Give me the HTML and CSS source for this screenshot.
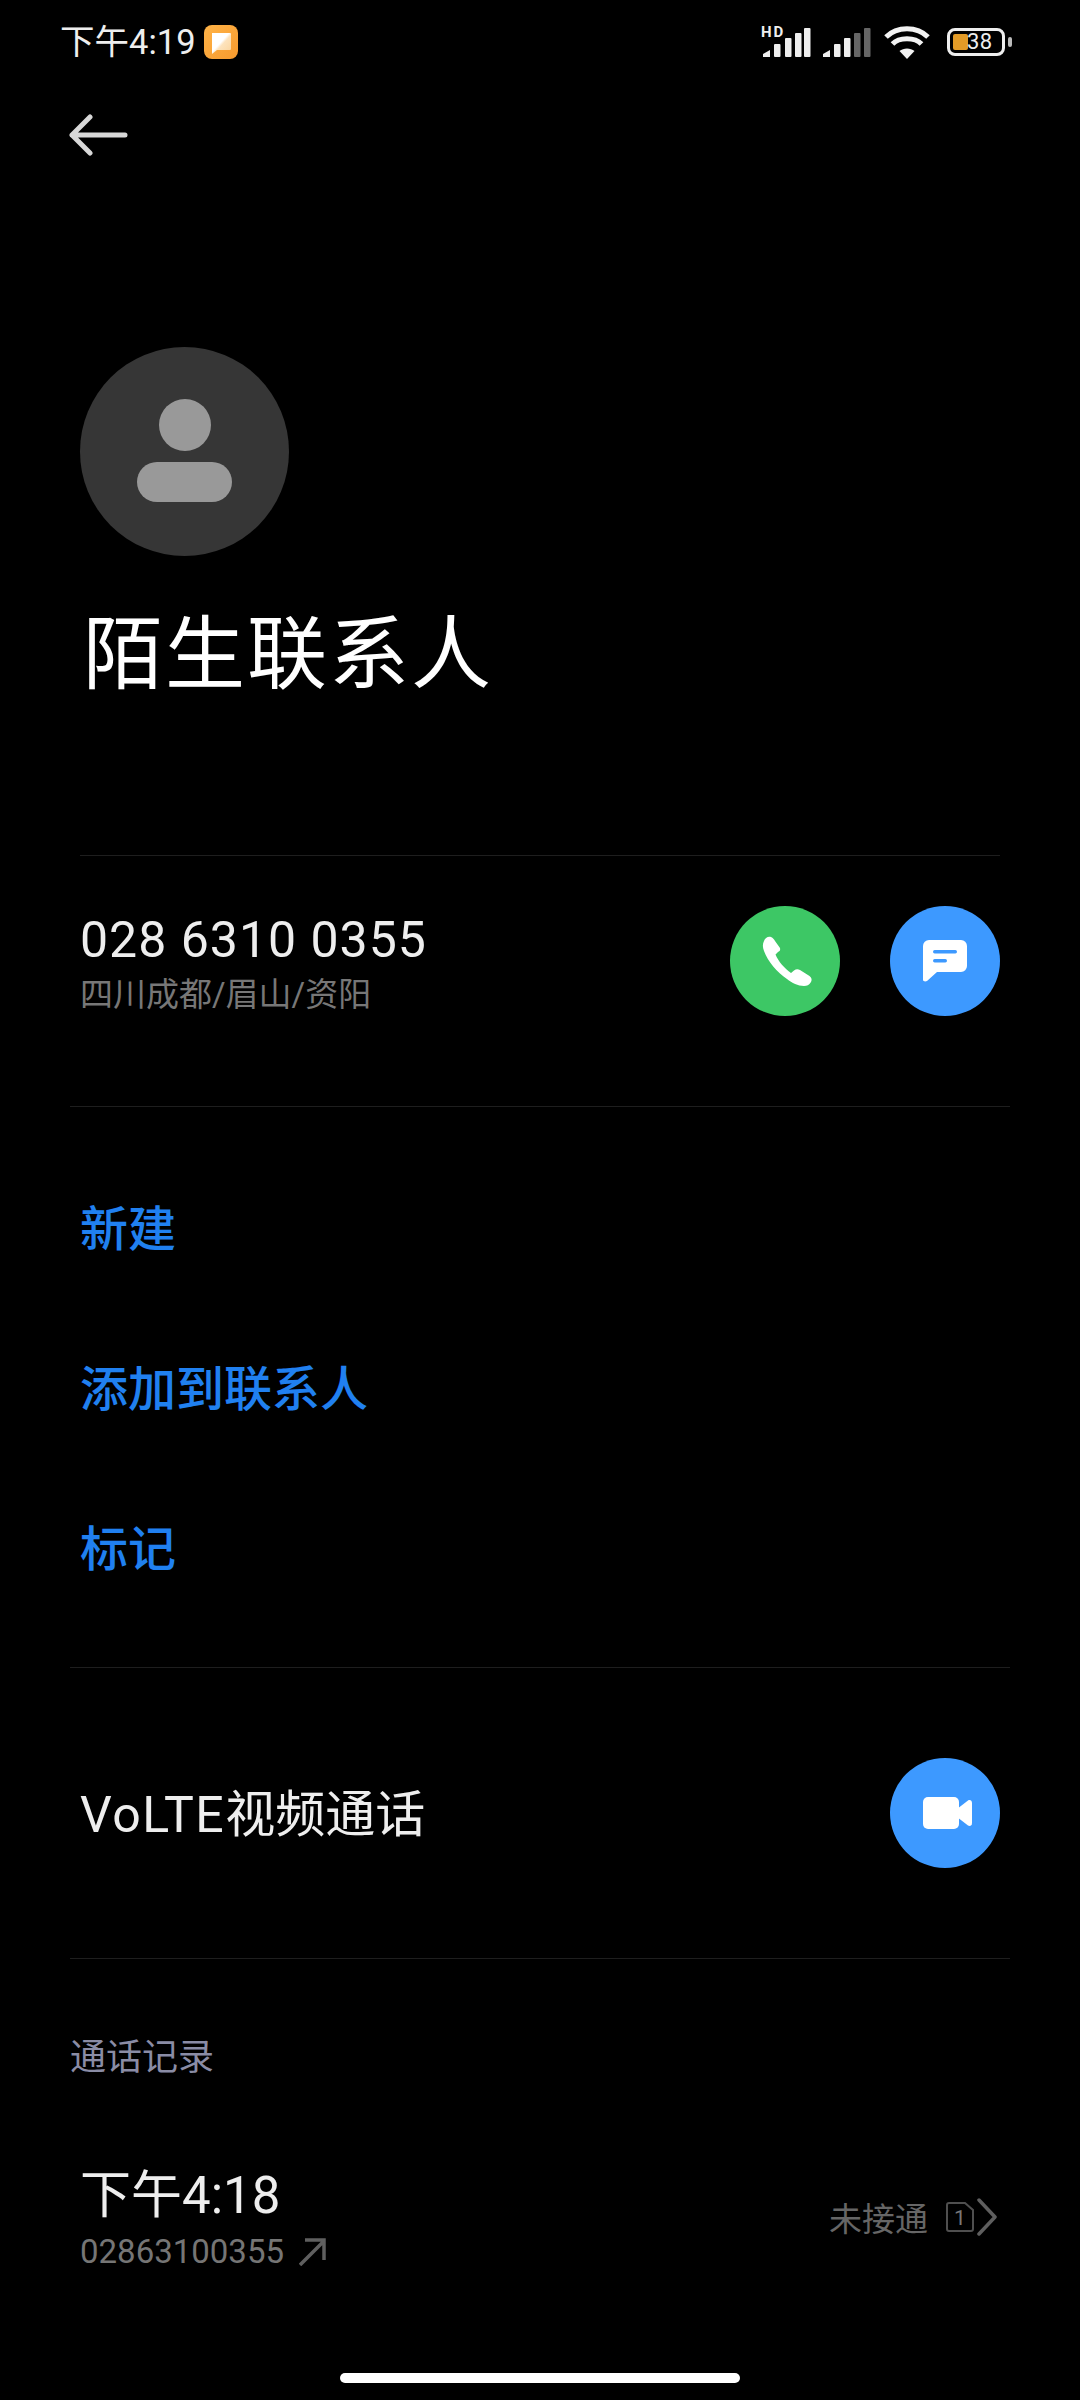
FILE: index.html
```html
<!DOCTYPE html>
<html lang="zh-CN">
<head>
<meta charset="utf-8">
<title>陌生联系人</title>
<link rel="stylesheet" href="styles.css">
</head>
<body>
<div class="page">
  <header class="status">
    <div class="status-left">
      <span class="clock">下午4:19</span>
      <svg class="note" width="34" height="34" viewBox="0 0 34 34"><defs><linearGradient id="ng" x1="0" y1="0" x2="1" y2="1"><stop offset="0" stop-color="#ffb347"/><stop offset="1" stop-color="#f79a2e"/></linearGradient><linearGradient id="nw" x1="0" y1="0" x2="1" y2="1"><stop offset="0.45" stop-color="#fff"/><stop offset="0.55" stop-color="#fde3bd"/><stop offset="1" stop-color="#fbd39a"/></linearGradient></defs><rect width="34" height="34" rx="8" fill="url(#ng)"/><path d="M8 8h18a1 1 0 0 1 1 1v15a1 1 0 0 1-1 1H13l-5 4z" fill="url(#nw)"/></svg>
    </div>
    <div class="status-right">
      <svg class="sig sig-hd" width="52" height="42" viewBox="0 -8 52 42"><text x="0" y="12" class="hd">HD</text><g fill="#eee"><path d="M2 32v-3l7-4v7z"/><rect x="13" y="19" width="6.5" height="13" rx="1"/><rect x="24" y="13" width="6.5" height="19" rx="1"/><rect x="34" y="8" width="6.5" height="24" rx="1"/><rect x="43" y="3" width="6.5" height="29" rx="1"/></g></svg>
      <svg class="sig sig-two" width="48" height="34" viewBox="0 0 48 34"><path d="M0 32v-3l7-4v7z" fill="#eee"/><rect x="11" y="19" width="6.5" height="13" rx="1" fill="#eee"/><rect x="21" y="13" width="6.5" height="19" rx="1" fill="#eee"/><rect x="31" y="8" width="6.5" height="24" rx="1" fill="#666"/><rect x="41" y="3" width="6.5" height="29" rx="1" fill="#666"/></svg>
      <svg class="wifi" width="46" height="33" viewBox="0 0 46 33" fill="none" stroke="#f2f2f2" stroke-width="5"><path d="M2 11C13 0 33 0 44 11"/><path d="M8.5 18C15 11 31 11 37.5 18"/><path d="M23 33l-7.5-8c4-3.500 11-3.500 15 0z" fill="#f2f2f2" stroke="none"/></svg>
      <div class="battery">
        <div class="batt-body"><span class="batt-fill"></span><span class="batt-num">38</span></div>
        <span class="batt-cap"></span>
      </div>
    </div>
  </header>

  <div class="back">
    <svg width="60" height="42" viewBox="0 0 60 42" fill="none" stroke="#d8d8d8" stroke-width="5" stroke-linecap="round" stroke-linejoin="round"><path d="M56 21H3M21 3 3 21l18 18"/></svg>
  </div>

  <section class="hero">
    <div class="avatar">
      <span class="avatar-head"></span>
      <span class="avatar-body"></span>
    </div>
    <h1 class="name">陌生联系人</h1>
  </section>

  <hr class="rule rule-inner">

  <section class="number-row">
    <div class="number-text">
      <div class="number">028 6310 0355</div>
      <div class="place">四川成都/眉山/资阳</div>
    </div>
    <div class="actions">
      <span class="round green">
        <svg class="phone" width="50" height="50" viewBox="0 0 50 50"><path d="M2 5C3 2 6 0 9 1c2 1 3 2 4 4l5 7c.5 2 0 3-2 4l-2.500 2.500C16 25 23 33 29 37l3-2.500c2-1.500 4-1.500 6-.5l9.500 6c2.500 2 2.500 4 1.500 6-2 3-4 4-7 4-6 0-12-3-17-7C15 36 6 26 2 15 .5 11 .5 8 2 5z" fill="#fff"/></svg>
      </span>
      <span class="round blue">
        <svg width="44" height="42" viewBox="0 0 44 42"><path d="M6 0h32a6 6 0 0 1 6 6v20a6 6 0 0 1-6 6H14L4 41c-2 1-4 0-4-1V6a6 6 0 0 1 6-6z" fill="#fff"/><rect x="10" y="10" width="24" height="3.500" rx="1.700" fill="#3d99ff"/><rect x="10" y="19" width="14" height="3.500" rx="1.700" fill="#3d99ff"/></svg>
      </span>
    </div>
  </section>

  <hr class="rule">

  <nav class="links">
    <a class="link">新建</a>
    <a class="link">添加到联系人</a>
    <a class="link">标记</a>
  </nav>

  <hr class="rule">

  <section class="video-row">
    <span class="video-label"><span class="latin">VoLTE</span>视频通话</span>
    <span class="round blue">
      <svg class="cam" width="49" height="32" viewBox="0 0 49 32"><rect width="36" height="32" rx="5" fill="#fff"/><path d="M34 12 45 3.500C47 2.500 49 3.500 49 6v20c0 2.500-2 3.500-4 2.500L34 20z" fill="#fff"/></svg>
    </span>
  </section>

  <hr class="rule">

  <div class="log-title">通话记录</div>

  <section class="log-row">
    <div>
      <div class="log-time">下午4:18</div>
      <div class="log-sub">
        <span>02863100355</span>
        <svg width="27" height="28" viewBox="0 0 27 28" fill="none" stroke="#5f5f5f" stroke-width="3.500"><path d="M1 27 25 3M6 2h19v20"/></svg>
      </div>
    </div>
    <div class="log-right">
      <span class="log-status">未接通</span>
      <svg class="sim" width="28" height="30" viewBox="0 0 28 30"><path d="M3 1h16l8 7v19a2 2 0 0 1-2 2H3a2 2 0 0 1-2-2V3a2 2 0 0 1 2-2z" fill="none" stroke="#4f4f4f" stroke-width="2"/><text x="14" y="23" class="sim-num">1</text></svg>
      <svg width="20" height="38" viewBox="0 0 20 38" fill="none" stroke="#5f5f5f" stroke-width="3.500" stroke-linecap="round" stroke-linejoin="round"><path d="M2 2l16 17L2 36"/></svg>
    </div>
  </section>

  <div class="home-wrap"><span class="home"></span></div>
</div>
</body>
</html>
```
FILE: styles.css
```css
* { box-sizing: border-box; }
html, body { margin: 0; padding: 0; background: #000; }
body { font-family: Roboto, "Noto Sans CJK SC", "Noto Sans", sans-serif; color: #fff; }
.page { width: 1080px; height: 2400px; background: #000; display: flex; flex-direction: column; overflow: hidden; }

.status { height: 84px; padding: 20px 68px 0 60px; display: flex; justify-content: space-between; align-items: flex-start; }
.status-left { display: flex; align-items: center; gap: 8px; height: 44px; }
.clock { font-size: 34.5px; color: #eee; line-height: 44px; }
.status-right { display: flex; align-items: flex-start; }
.sig { display: block; margin-top: 5px; }
.sig-hd { margin-top: -3px; }
.sig-two { margin-left: 10px; }
.hd { font: 700 15px Roboto, sans-serif; letter-spacing: 2px; fill: #eee; }
.wifi { display: block; margin: 6px 0 0 13px; }
.battery { display: flex; align-items: center; gap: 3px; margin: 8px 0 0 17px; }
.batt-body { position: relative; width: 58px; height: 28px; border: 3px solid #eee; border-radius: 8px; }
.batt-fill { position: absolute; left: 3px; top: 3px; width: 15px; height: 16px; background: #e29b27; border-radius: 2px; }
.batt-num { position: absolute; left: 17px; top: -2px; font-size: 22px; line-height: 26px; letter-spacing: 0.5px; color: #eee; }
.batt-cap { width: 4px; height: 10px; background: #bbb; border-radius: 2px; }

.back { height: 100px; padding: 0 0 0 69px; display: flex; align-items: flex-start; }
.back svg { display: block; margin-top: 30px; }

.hero { padding: 163px 0 0 80px; }
.avatar { width: 209px; height: 209px; border-radius: 50%; background: #363636; display: flex; flex-direction: column; align-items: center; padding-top: 52px; gap: 11px; }
.avatar-head { width: 52px; height: 52px; border-radius: 50%; background: #999; }
.avatar-body { width: 95px; height: 40px; border-radius: 20px; background: #999; }
.name { margin: 49px 0 0 3px; font-size: 80px; line-height: 100px; font-weight: 400; letter-spacing: 2px; color: #fff; }

.rule { width: 940px; height: 1px; margin: 0 auto; border: 0; background: #1e1e1e; flex: none; }
.rule-inner { width: 920px; margin-top: 150px; }

.number-row { height: 250px; padding: 0 80px 40px; display: flex; justify-content: space-between; align-items: center; }
.number-text { margin-top: 5px; }
.number { font-size: 50px; line-height: 60px; color: #eee; letter-spacing: 1px; }
.place { font-size: 33px; line-height: 44px; margin-top: 3px; color: #777; }
.actions { display: flex; gap: 50px; }
.round { width: 110px; height: 110px; border-radius: 50%; display: flex; align-items: center; justify-content: center; flex: none; }
.green { background: #3dc765; }
.blue { background: #3d99ff; }
.phone { margin-left: 4px; }
.cam { margin-left: 5px; }

.links { height: 560px; padding-top: 38px; display: flex; flex-direction: column; }
.link { height: 160px; padding-left: 80px; display: flex; align-items: center; font-size: 48px; font-weight: 500; color: #2080f0; }

.video-row { height: 290px; padding: 0 80px; display: flex; justify-content: space-between; align-items: center; }
.video-label { font-size: 50px; line-height: 60px; margin-top: 4px; color: #eee; }
.latin { letter-spacing: 1.5px; }

.log-title { margin: 75px 0 0 70px; font-size: 36px; line-height: 48px; color: #8a8ca5; }

.log-row { margin-top: 83px; padding: 0 83px 0 80px; display: flex; justify-content: space-between; align-items: center; }
.log-time { font-size: 51px; line-height: 62px; color: #eee; }
.log-sub { display: flex; align-items: center; gap: 15px; margin-top: 2px; font-size: 33px; line-height: 46px; color: #757575; }
.log-right { display: flex; align-items: center; gap: 3px; margin-top: -6px; }
.log-status { font-size: 33px; color: #666; margin-right: 15px; }
.sim { display: block; }
.sim-num { font: 400 21px Roboto, sans-serif; fill: #777; text-anchor: middle; }

.home-wrap { margin-top: auto; height: 27px; display: flex; justify-content: center; }
.home { width: 400px; height: 10px; border-radius: 5px; background: #fff; }
```
